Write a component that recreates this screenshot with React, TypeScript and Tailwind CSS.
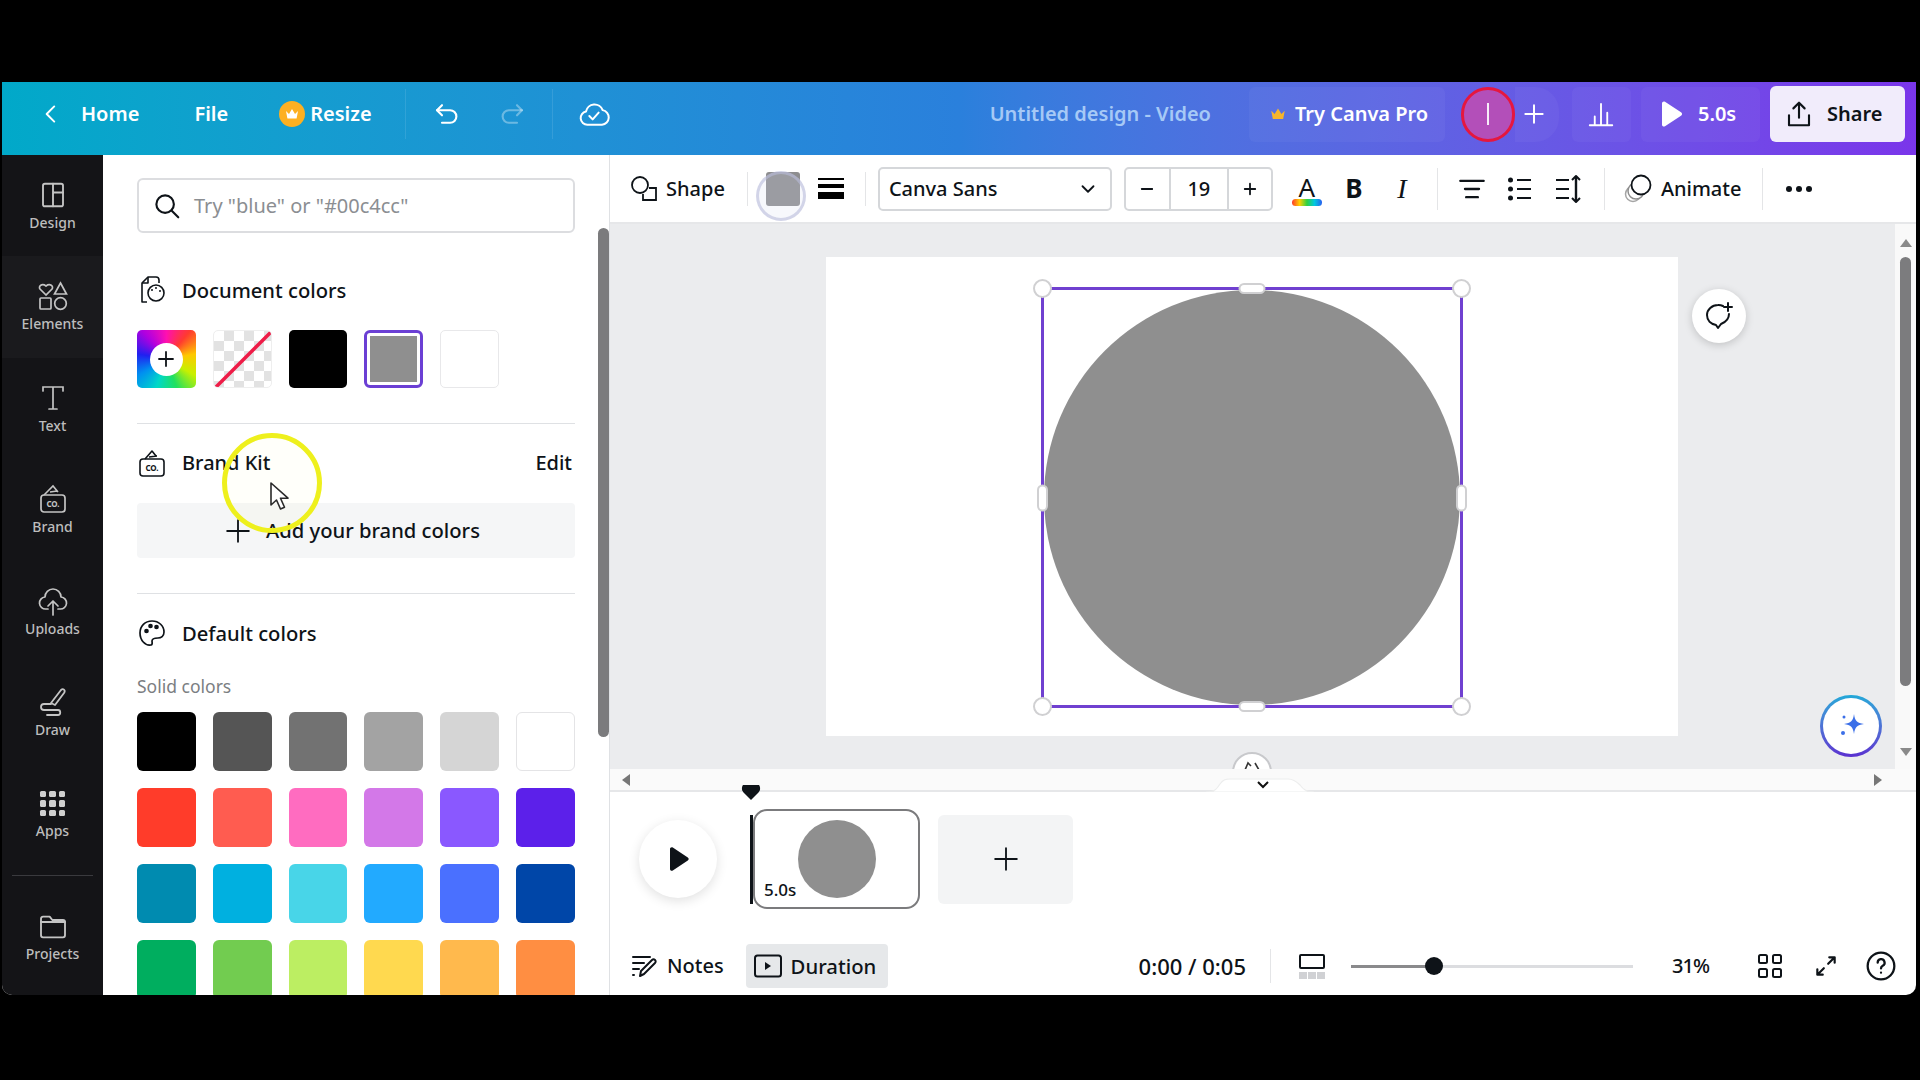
import React from "react";

type P = { className?: string; children?: React.ReactNode; w?: number; sw?: number };
function Ic({ className = "", children, w = 24, sw = 1.6 }: P) {
  return (
    <svg width={w} height={w} viewBox="0 0 24 24" fill="none" stroke="currentColor" strokeWidth={sw} strokeLinecap="round" strokeLinejoin="round" className={"shrink-0 " + className}>
      {children}
    </svg>
  );
}

function Rail({ label, active, children }: { label: string; active?: boolean; children: React.ReactNode }) {
  return (
    <div className={"h-[101.4px] flex flex-col items-center pt-[26px] " + (active ? "bg-[#1a1a1d]" : "")}>
      <div className="h-[28px] flex items-center justify-center text-[#c4c4c4]">{children}</div>
      <div className="mt-[4px] h-[20px] leading-[20px] text-[14px] font-medium text-[#bdbdbd]">{label}</div>
    </div>
  );
}

const Divider = ({ cls }: { cls: string }) => <div className={"w-px shrink-0 " + cls} />;

const rows = [
  ["#000000", "#555555", "#727272", "#a3a3a3", "#d5d5d5", "#ffffff"],
  ["#ff3c2a", "#ff5c50", "#ff6cc0", "#d378e8", "#8a58ff", "#5c20ea"],
  ["#008bb0", "#00b0e0", "#48d5e8", "#22aaff", "#4a70ff", "#0046a8"],
  ["#00ae5f", "#72cc50", "#bcee62", "#ffd94f", "#ffb94d", "#ff8e42"],
];

function Crown({ w = 16, color = "#ffffff" }: { w?: number; color?: string }) {
  return (
    <svg width={w} height={w} viewBox="0 0 16 16" className="shrink-0">
      <path d="M2 5l3 3 3-5 3 5 3-3-1.4 7.5H3.4z" fill={color} />
    </svg>
  );
}

export default function App() {
  return (
    <div className="w-[1920px] h-[1080px] bg-black pt-[82px] pl-[2px] pr-[4px] overflow-hidden [font-family:'Noto_Sans','Liberation_Sans',sans-serif] text-[#0e1318]">
      <div className="w-[1914px] h-[913px] flex flex-col bg-white rounded-b-[10px] overflow-hidden">
        {/* header */}
        <header className="h-[73px] shrink-0 flex items-center pb-[9px] text-white text-[20px] font-semibold bg-gradient-to-r from-[#01a9c9] via-[#2a80dc] to-[#7a35ea]">
          <Ic w={26} sw={1.8} className="ml-[36px]"><path d="M15 5l-7 7 7 7" /></Ic>
          <span className="ml-[17px]">Home</span>
          <span className="ml-[55px]">File</span>
          <span className="ml-[51px] w-[26px] h-[26px] rounded-full bg-[#fdb022] flex items-center justify-center"><Crown /></span>
          <span className="ml-[5px]">Resize</span>
          <Divider cls="h-[50px] bg-white/10 ml-[33px]" />
          <Ic w={30} sw={1.7} className="ml-[26px]"><path d="M8 5L4 9l4 4" /><path d="M4 9h10.5a5 5 0 0 1 0 10H8" /></Ic>
          <Ic w={30} sw={1.7} className="ml-[35px] text-white/35"><path d="M16 5l4 4-4 4" /><path d="M20 9H9.5a5 5 0 0 0 0 10H16" /></Ic>
          <Divider cls="h-[50px] bg-white/10 ml-[25px]" />
          <Ic w={32} sw={1.5} className="ml-[25px]"><path d="M7 20a5 5 0 0 1-1-9.900 6.500 6.500 0 0 1 12.500-1 5.500 5.500 0 0 1-.5 10.900z" /><path d="M8.500 13.500l2.500 2.500 4.500-5" /></Ic>
          <span className="ml-[380px] text-[#a6c9f6]">Untitled design - Video</span>
          <div className="ml-[38px] w-[196px] h-[55px] rounded-[6px] bg-white/[0.04] flex items-center pl-[20px] gap-[8px]">
            <Crown w={18} color="#f7b52c" />
            <span>Try Canva Pro</span>
          </div>
          <div className="ml-[16px] w-[54px] h-[55px] rounded-full border-[3px] border-[#e5173f] bg-[#b34fb9] flex items-center justify-center">
            <div className="w-[2px] h-[22px] bg-white/90" />
          </div>
          <div className="w-[44px] h-[55px] rounded-r-[24px] bg-white/[0.04] flex items-center pl-[6px]">
            <Ic w={26} sw={1.8}><path d="M12 4v16M4 12h16" /></Ic>
          </div>
          <div className="ml-[13px] w-[59px] h-[55px] rounded-[6px] bg-white/[0.04] flex items-center justify-center">
            <Ic w={30} sw={1.5}><path d="M3 21h18M7 21v-7M12 21V4M17 21v-10" /></Ic>
          </div>
          <div className="ml-[10px] w-[119px] h-[55px] rounded-[6px] bg-white/[0.04] flex items-center pl-[18px]">
            <svg width="24" height="30" viewBox="0 0 24 30" className="shrink-0"><path d="M3 4.5c0-1.8 1.6-2.6 3-1.8l16 10.6c1.4.9 1.4 2.6 0 3.5L6 27.3c-1.4.8-3 0-3-1.8z" fill="#fff" /></svg>
            <span className="ml-[15px]">5.0s</span>
          </div>
          <div className="ml-[10px] w-[135px] h-[56px] rounded-[6px] bg-[#f1ecfb] text-[#0e1318] flex items-center pl-[14px]">
            <Ic w={30} sw={1.7}><path d="M12 15V3M7.5 7.5L12 3l4.5 4.5" /><path d="M4 13v8h16v-8" /></Ic>
            <span className="ml-[13px]">Share</span>
          </div>
        </header>

        <div className="flex-1 flex min-h-0">
          {/* rail */}
          <aside className="w-[101px] shrink-0 bg-[#141417] flex flex-col">
            <Rail label="Design">
              <Ic w={30} sw={1.5}><rect x="4" y="3" width="16" height="18" rx="1.5" /><path d="M12 3v18M12 10h8" /></Ic>
            </Rail>
            <Rail label="Elements" active>
              <svg width="32" height="32" viewBox="0 0 32 32" fill="none" stroke="currentColor" strokeWidth="1.7">
                <path d="M9 15l-6-6c-2-3 2-6 6-3 4-3 8 0 6 3z" />
                <path d="M23.5 3l6 11h-12z" />
                <rect x="3" y="18" width="11" height="11" rx="1" />
                <circle cx="23.5" cy="23.5" r="5.8" />
              </svg>
            </Rail>
            <Rail label="Text">
              <svg width="30" height="30" viewBox="0 0 30 30" fill="none" stroke="currentColor" strokeWidth="1.7" strokeLinecap="round"><path d="M5 8V4h20v4M15 4v22M11 26h8" /></svg>
            </Rail>
            <Rail label="Brand">
              <svg width="30" height="32" viewBox="0 0 30 32">
                <path d="M6 12l9-9 5 6M12 9l7-1" fill="none" stroke="currentColor" strokeWidth="1.6" />
                <rect x="3" y="12" width="24" height="17" rx="3" fill="none" stroke="currentColor" strokeWidth="1.7" />
                <text x="15" y="24" textAnchor="middle" fontSize="8" fontWeight="700" fill="currentColor">CO.</text>
              </svg>
            </Rail>
            <Rail label="Uploads">
              <svg width="32" height="32" viewBox="0 0 32 32" fill="none" stroke="currentColor" strokeWidth="1.7" strokeLinecap="round" strokeLinejoin="round">
                <path d="M11 24H9a6 6 0 0 1-1-12 8 8 0 0 1 16 0 6 6 0 0 1-1 12h-2" />
                <path d="M16 30V17M11 21l5-5 5 5" />
              </svg>
            </Rail>
            <Rail label="Draw">
              <svg width="30" height="32" viewBox="0 0 30 32" fill="none" stroke="currentColor" strokeWidth="1.8" strokeLinecap="round" strokeLinejoin="round">
                <path d="M13 17L23 4c2-2 5 0 3 3L17 19z" />
                <path d="M13 18H6c-4 0-4 6 0 6h14c3 0 3 5 0 5H9" />
              </svg>
            </Rail>
            <Rail label="Apps">
              <div className="grid grid-cols-3 gap-[3px]">
                {Array.from({ length: 9 }).map((_, i) => (
                  <div key={i} className="w-[6.5px] h-[6.5px] rounded-[1.5px] bg-[#cfcfcf]" />
                ))}
              </div>
            </Rail>
            <div className="mt-[10px] mx-[10px] h-px bg-[#3a3a3e]" />
            <div className="mt-[10px]">
              <Rail label="Projects">
                <Ic w={32} sw={1.4}><path d="M3 6.5A1.5 1.5 0 0 1 4.500 5h5l2 2.500h8A1.500 1.500 0 0 1 21 9v10a1.500 1.500 0 0 1-1.500 1.500h-15A1.500 1.500 0 0 1 3 19z" /><path d="M3 9h18" /></Ic>
              </Rail>
            </div>
          </aside>

          {/* color panel */}
          <section className="relative w-[507px] shrink-0 overflow-hidden border-r border-[#dfe1e4] px-[34px] pt-[23px]">
            <div className="w-[438px] h-[55px] rounded-[6px] border-2 border-[#dcdde0] flex items-center pl-[13px]">
              <Ic w={30} sw={1.7} className="text-[#0e1318]"><circle cx="10.500" cy="10.500" r="7" /><path d="M16 16l5 5" /></Ic>
              <span className="ml-[12px] text-[20px] text-[#8b8e92]">Try "blue" or "#00c4cc"</span>
            </div>

            <div className="mt-[43px] h-[28px] flex items-center leading-[28px]">
              <svg width="30" height="32" viewBox="0 0 30 32" fill="none" stroke="#0e1318" strokeWidth="1.6" strokeLinejoin="round" className="shrink-0">
                <path d="M10 28H5V9l6-6h8c2 0 3 1 3 3v3" />
                <path d="M11 3v6H5" />
                <circle cx="19" cy="19" r="8" />
                <path d="M15 16h0M19 14h0M23 17h0" strokeLinecap="round" strokeWidth="2" />
              </svg>
              <span className="ml-[15px] text-[20.2px] font-medium">Document colors</span>
            </div>
            <div className="mt-[26px] grid grid-cols-6 gap-[17px]">
              <div className="h-[58px] rounded-[5px] flex items-center justify-center bg-[conic-gradient(#ff10b0,#ff3a30,#ffc800,#c8f000,#20e060,#00d8c8,#0090f0,#2020f0,#b000e0,#ff10b0)]">
                <div className="w-[33px] h-[33px] rounded-full bg-white flex items-center justify-center">
                  <Ic w={24} sw={1.8}><path d="M12 5v14M5 12h14" /></Ic>
                </div>
              </div>
              <div className="relative h-[58px] rounded-[5px] overflow-hidden border border-[#eeeeee] bg-[repeating-conic-gradient(#e2e2e2_0_25%,#ffffff_0_50%)] bg-[length:20px_20px]">
                <svg className="absolute inset-0" width="58" height="58" viewBox="0 0 58 58"><path d="M2 56L56 2" stroke="#ee1c47" strokeWidth="3.500" strokeLinecap="round" /></svg>
              </div>
              <div className="h-[58px] rounded-[5px] bg-black" />
              <div className="h-[58px] rounded-[6px] border-[3px] border-[#6b3fd4] p-[3px]">
                <div className="w-full h-full bg-[#8f8f8f]" />
              </div>
              <div className="h-[58px] rounded-[5px] bg-white border border-[#e8e8ea]" />
            </div>
            <div className="mt-[35px] h-px bg-[#dfe1e4]" />

            <div className="mt-[25px] h-[28px] flex items-center">
              <svg width="30" height="32" viewBox="0 0 30 32" className="shrink-0" fill="none" stroke="#0e1318" strokeWidth="1.600" strokeLinejoin="round">
                <path d="M8 12l7-8 4 5M12 10l8-1" />
                <rect x="3" y="12" width="24" height="17" rx="3" />
                <text x="15" y="24" textAnchor="middle" fontSize="8" fontWeight="700" stroke="none" fill="#0e1318">CO.</text>
              </svg>
              <span className="ml-[15px] text-[20px] font-medium">Brand Kit</span>
              <span className="ml-auto text-[20px] font-medium mr-[3px]">Edit</span>
            </div>
            <div className="mt-[26px] h-[55px] rounded-[4px] bg-[#f5f6f7] flex items-center pl-[88px]">
              <Ic w={26} sw={1.7}><path d="M12 2v20M2 12h20" /></Ic>
              <span className="ml-[15px] text-[20.2px] font-medium">Add your brand colors</span>
            </div>
            <div className="mt-[35px] h-px bg-[#dfe1e4]" />

            <div className="mt-[25px] h-[28px] flex items-center leading-[28px]">
              <svg width="30" height="30" viewBox="0 0 30 30" className="shrink-0" fill="none" stroke="#0e1318" strokeWidth="1.700" strokeLinejoin="round">
                <path d="M15 3C8 3 3 8 3 15s5 13 11 12c2-.5 1-3 1-4 0-3 3-3 6-3 3 0 6-2 6-6C27 8 22 3 15 3z" />
                <circle cx="9.500" cy="13" r="1.500" fill="#0e1318" />
                <circle cx="13.500" cy="8" r="1.500" fill="#0e1318" />
                <circle cx="19.500" cy="9" r="1.500" fill="#0e1318" />
              </svg>
              <span className="ml-[15px] text-[20.2px] font-medium">Default colors</span>
            </div>
            <div className="mt-[27px] h-[24px] leading-[24px] text-[17.500px] text-[#7b7e82]">Solid colors</div>
            <div className="mt-[14px] grid grid-cols-6 gap-[17px]">
              {rows.flat().map((c, i) => (
                <div key={i} className={"h-[59px] rounded-[6px] " + (c === "#ffffff" ? "border border-[#e4e4e6]" : "")} style={{ backgroundColor: c }} />
              ))}
            </div>

            {/* scrollbar + cursor highlight overlay */}
            <div className="absolute left-[495px] top-[73px] w-[11px] h-[509px] rounded-full bg-[#7b7b7d]" />
            <div className="absolute left-[119px] top-[278px] w-[100px] h-[100px] rounded-full border-[5px] border-[#eef01d] bg-[#ffff00]/[0.02]" />
            <svg className="absolute left-[166px] top-[326px]" width="22" height="30" viewBox="0 0 22 30">
              <path d="M2 2v22l5.500-5 4 9 4-1.800-4-9h7.500z" fill="#fff" stroke="#2a2a2a" strokeWidth="1.600" strokeLinejoin="round" />
            </svg>
          </section>

          {/* workspace */}
          <main className="flex-1 min-w-0 flex flex-col">
            <div className="h-[69px] shrink-0 flex items-center border-b-2 border-[#e6e7e9] text-[20px] font-medium">
              <svg width="28" height="28" viewBox="0 0 28 28" fill="none" stroke="#0e1318" strokeWidth="1.800" className="ml-[20px] shrink-0">
                <circle cx="10" cy="10" r="8" />
                <path d="M19 13h7v12H13v-6" />
              </svg>
              <span className="ml-[8px]">Shape</span>
              <Divider cls="h-[34px] bg-[#e4e5e7] ml-[22px]" />
              <div className="relative ml-[18px] w-[34px] h-[34px] rounded-[3px] bg-[#8d8d8f]">
                <div className="absolute -left-[10px] -top-[1px] w-[50px] h-[50px] rounded-full border-[3px] border-[#b9bddb]/60 bg-[#d9dbf0]/20" />
              </div>
              <div className="ml-[18px] w-[26px] flex flex-col">
                <div className="h-[2px] bg-black" />
                <div className="mt-[4px] h-[4px] bg-black" />
                <div className="mt-[4px] h-[7px] bg-black" />
              </div>
              <Divider cls="h-[34px] bg-[#e4e5e7] ml-[21px]" />
              <div className="ml-[12px] w-[234px] h-[44px] rounded-[5px] border-2 border-[#d5d7da] flex items-center pl-[9px] pr-[11px]">
                <span>Canva Sans</span>
                <Ic w={22} sw={2} className="ml-auto"><path d="M6 9l6 6 6-6" /></Ic>
              </div>
              <div className="ml-[12px] w-[149px] h-[44px] rounded-[5px] border-2 border-[#d5d7da] flex items-center">
                <div className="w-[43px] flex justify-center"><Ic w={18} sw={2.400}><path d="M5 12h14" /></Ic></div>
                <div className="w-[60px] h-full border-x-2 border-[#d5d7da] flex items-center justify-center">19</div>
                <div className="flex-1 flex justify-center"><Ic w={18} sw={2.400}><path d="M12 5v14M5 12h14" /></Ic></div>
              </div>
              <div className="relative ml-[19px] w-[30px] h-[34px] flex justify-center">
                <span className="text-[26px] leading-[30px] font-normal">A</span>
                <div className="absolute bottom-0 left-0 w-[30px] h-[7px] rounded-full bg-[linear-gradient(90deg,#ff3a2a,#ffd000,#30d040,#00c8e0,#2a60f0)]" />
              </div>
              <span className="ml-[21px] w-[22px] text-center text-[26px] font-bold">B</span>
              <span className="ml-[26px] w-[22px] text-center text-[28px] italic [font-family:'Liberation_Serif',serif]">I</span>
              <Divider cls="h-[42px] bg-[#e4e5e7] ml-[24px]" />
              <Ic w={28} sw={2} className="ml-[20px]"><path d="M2 5h20M6 12h12M7 19h10" /></Ic>
              <svg width="26" height="28" viewBox="0 0 26 28" className="ml-[21px] shrink-0" stroke="#0e1318" strokeWidth="2"><circle cx="3.500" cy="5" r="2.500" fill="#0e1318" stroke="none" /><circle cx="3.500" cy="14" r="2.500" fill="#0e1318" stroke="none" /><circle cx="3.500" cy="23" r="2.500" fill="#0e1318" stroke="none" /><path d="M10 5h14M10 14h14M10 23h14" /></svg>
              <svg width="28" height="30" viewBox="0 0 28 30" className="ml-[22px] shrink-0" fill="none" stroke="#0e1318" strokeWidth="2" strokeLinejoin="round"><path d="M1 6h13M1 15h13M1 24h13" /><path d="M21 3v24" strokeWidth="2.400" /><path d="M17 6l4-4 4 4M17 24l4 4 4-4" /></svg>
              <Divider cls="h-[42px] bg-[#e4e5e7] ml-[21px]" />
              <svg width="30" height="32" viewBox="0 0 30 32" fill="none" className="ml-[19px] shrink-0">
                <circle cx="9" cy="21" r="7.500" stroke="#a5a5a5" strokeWidth="1.500" />
                <circle cx="12" cy="18" r="8" stroke="#8e8e8e" strokeWidth="1.500" fill="#fff" />
                <circle cx="17" cy="12" r="9.500" stroke="#0e1318" strokeWidth="1.800" fill="#fff" />
              </svg>
              <span className="ml-[7px]">Animate</span>
              <Divider cls="h-[42px] bg-[#e4e5e7] ml-[21px]" />
              <div className="ml-[23px] flex gap-[4px]">
                <div className="w-[6px] h-[6px] rounded-full bg-[#0e1318]" />
                <div className="w-[6px] h-[6px] rounded-full bg-[#0e1318]" />
                <div className="w-[6px] h-[6px] rounded-full bg-[#0e1318]" />
              </div>
            </div>

            {/* canvas */}
            <div className="h-[545px] shrink-0 flex">
              <div className="relative flex-1 bg-[#ebecee] overflow-hidden flex justify-center pt-[33px]">
                <div className="relative -ml-[1px] w-[852px] h-[479px] bg-white">
                  <div className="absolute left-[215px] top-[30px] w-[422px] h-[421px] border-[3px] border-[#7040d0] flex items-center justify-center">
                    <div className="w-[416px] h-[415px] rounded-full bg-[#8f8f8f]" />
                    <div className="absolute -left-[11px] -top-[11px] w-[19px] h-[19px] rounded-full bg-white border-2 border-[#d0d0d2]" />
                    <div className="absolute -right-[11px] -top-[11px] w-[19px] h-[19px] rounded-full bg-white border-2 border-[#d0d0d2]" />
                    <div className="absolute -left-[11px] -bottom-[11px] w-[19px] h-[19px] rounded-full bg-white border-2 border-[#d0d0d2]" />
                    <div className="absolute -right-[11px] -bottom-[11px] w-[19px] h-[19px] rounded-full bg-white border-2 border-[#d0d0d2]" />
                    <div className="absolute left-1/2 -translate-x-1/2 -top-[7px] w-[27px] h-[11px] rounded-full bg-white border-2 border-[#d0d0d2]" />
                    <div className="absolute left-1/2 -translate-x-1/2 -bottom-[7px] w-[27px] h-[11px] rounded-full bg-white border-2 border-[#d0d0d2]" />
                    <div className="absolute top-1/2 -translate-y-1/2 -left-[7px] w-[11px] h-[27px] rounded-full bg-white border-2 border-[#d0d0d2]" />
                    <div className="absolute top-1/2 -translate-y-1/2 -right-[7px] w-[11px] h-[27px] rounded-full bg-white border-2 border-[#d0d0d2]" />
                  </div>
                </div>
                <div className="absolute left-[1082px] top-[65px] w-[54px] h-[54px] rounded-full bg-white shadow-[0_2px_8px_rgba(0,0,0,0.18)] flex items-center justify-center">
                  <svg width="32" height="32" viewBox="0 0 32 32" fill="none" stroke="#0e1318" strokeWidth="2" strokeLinecap="round" strokeLinejoin="round">
                    <path d="M20 6a11 11 0 0 0-5-1C9 5 4 9.500 4 15s4 9 9 10l2 3 3-4c5-2 8-6 8-10" />
                    <path d="M25 3v8M21 7h8" />
                  </svg>
                </div>
                <div className="absolute left-[1210px] top-[471px] w-[62px] h-[62px] rounded-full p-[3px] bg-gradient-to-b from-[#1fa8d8] to-[#5a2fd0]">
                  <div className="w-full h-full rounded-full bg-white flex items-center justify-center">
                    <svg width="34" height="34" viewBox="0 0 34 34"><path d="M20 5c1 7 3 9 10 10-7 1-9 3-10 10-1-7-3-9-10-10 7-1 9-3 10-10z" fill="#3b6fe8" /><circle cx="9" cy="24" r="2" fill="#3b6fe8" /><circle cx="10" cy="8" r="1.500" fill="#3b6fe8" /></svg>
                  </div>
                </div>
                <div className="absolute left-[622px] top-[528px] w-[40px] h-[40px] rounded-full bg-white border-2 border-[#c8c9cc] flex justify-center pt-[6px]">
                  <svg width="20" height="12" viewBox="0 0 20 12" fill="none" stroke="#333" strokeWidth="1.600"><path d="M3 10l3-7 3 3M13 3l4 7" /></svg>
                </div>
              </div>
              <div className="relative w-[21px] shrink-0 bg-[#f9f9f9]">
                <div className="absolute left-[5px] top-[15px] w-[12px] h-[8px] flex justify-center"><svg width="12" height="8"><path d="M6 0l6 8H0z" fill="#8a8a8a" /></svg></div>
                <div className="absolute left-[5px] top-[33px] w-[11px] h-[429px] rounded-full bg-[#7c7c7e]" />
                <div className="absolute left-[5px] top-[524px]"><svg width="12" height="8"><path d="M6 8L12 0H0z" fill="#8a8a8a" /></svg></div>
              </div>
            </div>

            {/* horizontal strip */}
            <div className="relative h-[23px] shrink-0 bg-[#fafafa] border-b-2 border-[#e6e7e9]">
              <svg className="absolute left-[12px] top-[5px]" width="8" height="12"><path d="M0 6l8-6v12z" fill="#777" /></svg>
              <svg className="absolute left-[1264px] top-[5px]" width="8" height="12"><path d="M8 6L0 0v12z" fill="#777" /></svg>
              <svg className="absolute left-[596px] top-[5px]" width="112" height="18" viewBox="0 0 112 18"><path d="M0 18c8 0 10-2 14-8 3-4 5-5 10-5h58c5 0 8 2 12 6 3 4 6 7 14 7z" fill="#fff" stroke="#eceded" strokeWidth="1.200" /></svg>
              <svg className="absolute left-[646px] top-[12px]" width="14" height="9" fill="none" stroke="#111" strokeWidth="2"><path d="M2 1l5 5 5-5" /></svg>
            </div>

            {/* timeline */}
            <div className="relative flex-1 min-h-0 pt-[17px]">
              <svg className="absolute left-[131px] -top-[9px]" width="20" height="18" viewBox="0 0 20 18"><path d="M2 2h16c2 3 1 6-1 8l-7 7-7-7C1 8 0 5 2 2z" fill="#0e1318" /></svg>
              <div className="flex items-center h-[100px]">
                <div className="ml-[29px] w-[78px] h-[78px] rounded-full bg-white shadow-[0_3px_12px_rgba(0,0,0,0.12)] flex items-center justify-center">
                  <svg width="22" height="26" viewBox="0 0 22 26" className="ml-[2px]"><path d="M2 3c0-1.500 1.500-2.300 2.800-1.500l15 10c1.200.8 1.200 2.200 0 3l-15 10C3.500 25.300 2 24.500 2 23z" fill="#0e1318" /></svg>
                </div>
                <div className="ml-[33px] w-[3px] h-[89px] bg-[#0e1318]" />
                <div className="relative w-[167px] h-[100px] rounded-[14px] border-[2.500px] border-[#7b7b7d] flex items-center justify-center">
                  <div className="w-[78px] h-[78px] rounded-full bg-[#8f8f8f]" />
                  <span className="absolute left-[9px] bottom-[5px] text-[17px] font-medium">5.0s</span>
                </div>
                <div className="ml-[18px] w-[135px] h-[89px] rounded-[6px] bg-[#f3f4f5] flex items-center justify-center">
                  <Ic w={26} sw={1.700}><path d="M12 2v20M2 12h20" /></Ic>
                </div>
              </div>
              <div className="mt-[35px] h-[44px] flex items-center text-[20px] font-medium">
                <svg width="28" height="28" viewBox="0 0 28 28" fill="none" stroke="#0e1318" strokeWidth="2" strokeLinecap="round" strokeLinejoin="round" className="ml-[21px] shrink-0">
                  <path d="M2 5h17M2 11h11M2 17h6M2 23h1" />
                  <path d="M9 24l1-5L21 8c2-2 5 1 3 3L13 22z" />
                </svg>
                <span className="ml-[8px]">Notes</span>
                <div className="ml-[22px] w-[142px] h-[44px] rounded-[4px] bg-[#e6e8ea] flex items-center pl-[8px]">
                  <svg width="28" height="24" viewBox="0 0 28 24" fill="none" className="shrink-0"><rect x="1" y="1.500" width="26" height="21" rx="2.500" stroke="#0e1318" strokeWidth="2" /><path d="M11 8l6 4-6 4z" fill="#0e1318" /></svg>
                  <span className="ml-[9px] text-[20.3px]">Duration</span>
                </div>
                <span className="ml-[251px] text-[22px]">0:00 / 0:05</span>
                <Divider cls="h-[34px] bg-[#e4e5e7] ml-[24px]" />
                <div className="ml-[28px] w-[26px] flex flex-col shrink-0">
                  <div className="h-[15px] border-2 border-[#0e1318] rounded-[2px]" />
                  <div className="mt-[3px] h-[7px] grid grid-cols-3 gap-[1px]">
                    <div className="bg-[#d0d1d4]" />
                    <div className="bg-[#d0d1d4]" />
                    <div className="bg-[#d0d1d4]" />
                  </div>
                </div>
                <div className="relative ml-[26px] w-[282px] h-[3px] bg-[#dcdde0]">
                  <div className="w-[82px] h-[3px] bg-[#8a8a8c]" />
                  <div className="absolute left-[74px] -top-[8px] w-[18px] h-[18px] rounded-full bg-[#0e1318]" />
                </div>
                <span className="ml-[39px] tracking-[-0.05em]">31%</span>
                <div className="ml-[49px] grid grid-cols-2 gap-[4px]">
                  {[0, 1, 2, 3].map((i) => <div key={i} className="w-[10px] h-[10px] rounded-[2.500px] border-2 border-[#0e1318]" />)}
                </div>
                <Ic w={26} sw={2} className="ml-[31px]"><path d="M14 10l6-6M15 4h5v5M10 14l-6 6M4 15v5h5" /></Ic>
                <Ic w={32} sw={1.700} className="ml-[26px]"><circle cx="12" cy="12" r="10" /><path d="M9.500 9.500a2.600 2.600 0 1 1 3.800 2.300c-.9.500-1.300 1-1.300 2" /><path d="M12 17h.01" /></Ic>
              </div>
            </div>
          </main>
        </div>
      </div>
    </div>
  );
}
